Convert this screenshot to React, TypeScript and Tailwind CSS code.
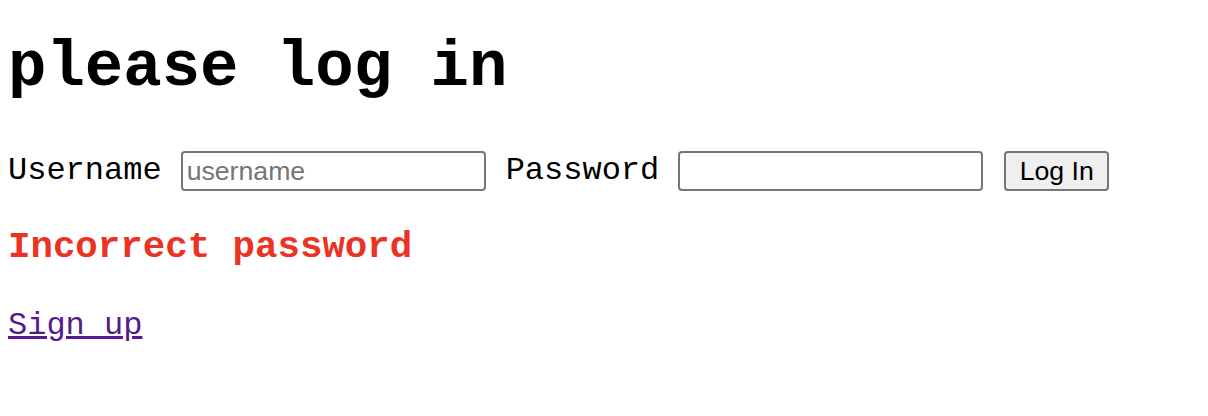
export default function App() {
  return (
    <div className="flex h-[416px] w-[1208px] flex-col items-start overflow-hidden bg-white px-[8px] font-['Liberation_Mono','Courier_New',monospace] text-black">
      <h1 className="mt-[36px] text-[64px] font-bold leading-none">please log in</h1>

      <form
        className="mt-[51px] flex h-[40px] items-center"
        onSubmit={(e) => e.preventDefault()}
      >
        <label htmlFor="username" className="text-[32px] leading-none">
          Username
        </label>
        <input
          id="username"
          placeholder="username"
          className="ml-[19px] h-[40px] w-[305px] rounded-[4px] border-2 border-[#767676] px-[4px] font-['Liberation_Sans',Arial,sans-serif] text-[26.67px] text-black outline-none placeholder:text-[#757575]"
        />
        <label htmlFor="password" className="ml-[20px] text-[32px] leading-none">
          Password
        </label>
        <input
          id="password"
          type="password"
          className="ml-[19px] h-[40px] w-[305px] rounded-[4px] border-2 border-[#767676] px-[4px] font-['Liberation_Sans',Arial,sans-serif] text-[26.67px] text-black outline-none"
        />
        <button
          type="submit"
          className="ml-[21px] h-[40px] w-[105px] rounded-[4px] border-2 border-[#767676] bg-[#efefef] font-['Liberation_Sans',Arial,sans-serif] text-[26.67px] leading-none text-black"
        >
          Log In
        </button>
      </form>

      <h3 className="mt-[38px] text-[37.44px] font-bold leading-none text-[#eb3323]">
        Incorrect password
      </h3>

      <a href="#" className="mt-[44px] block text-[32px] leading-none text-[#551a8b] underline">
        Sign up
      </a>
    </div>
  )
}
